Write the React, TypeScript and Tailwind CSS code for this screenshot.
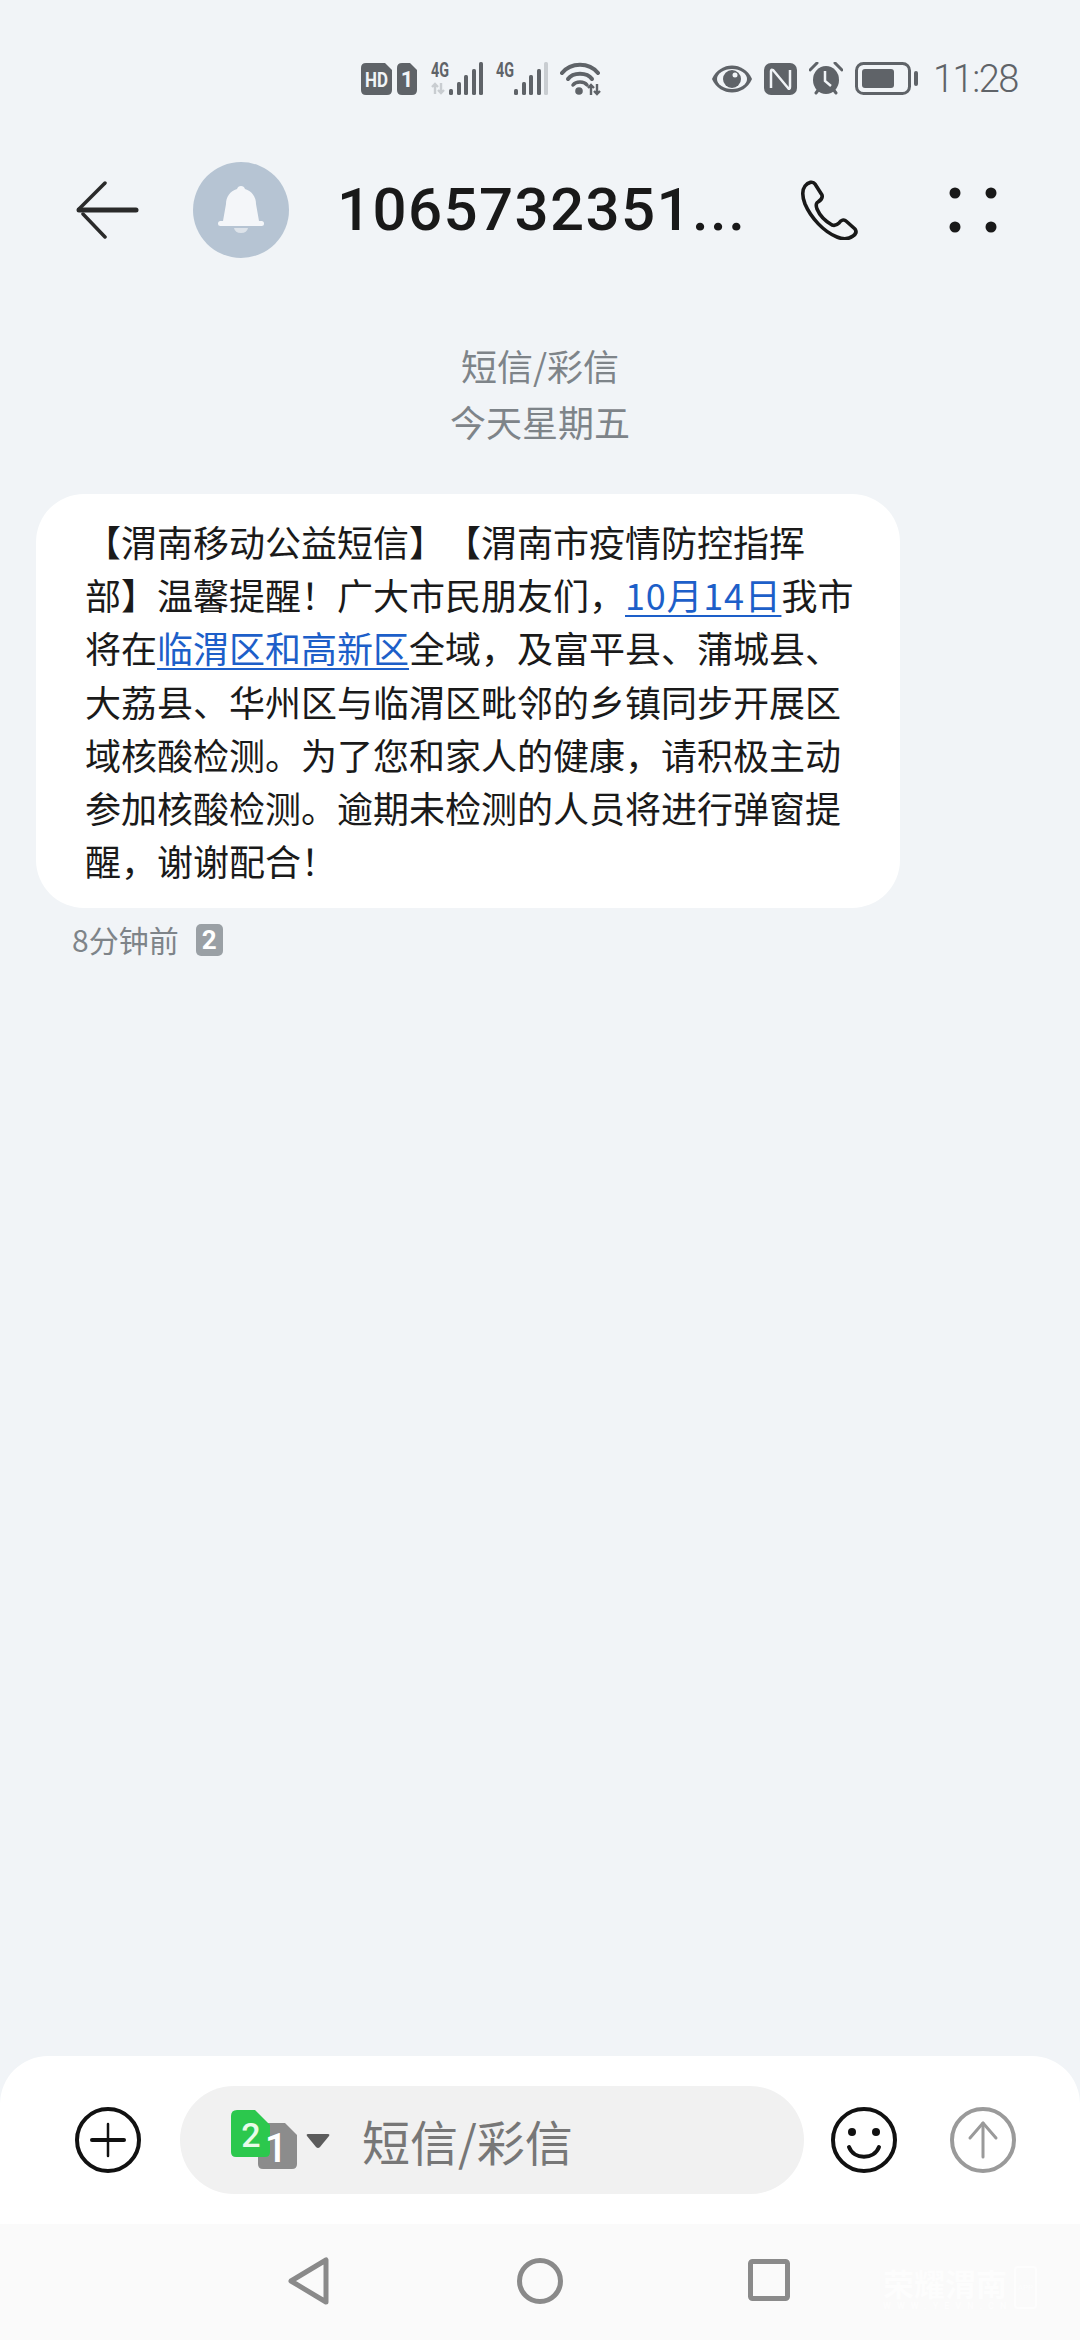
import React from "react";

const cjk = "font-['Noto_Sans_CJK_SC','Noto_Sans',sans-serif]";

function Sim({ label, w }: { label: string; w: number }) {
  return (
    <svg className="overflow-visible" width={w} height={32} viewBox={`0 0 ${w} 32`}>
      <path d={`M5 0 H${w - 7} L${w} 7 V27 Q${w} 32 ${w - 5} 32 H5 Q0 32 0 27 V5 Q0 0 5 0 Z`} fill="#5f6368" />
      <text x={w / 2} y={24} textAnchor="middle" fontFamily="Roboto, sans-serif" fontWeight={700} fontSize={w > 25 ? 20 : 22} fill="#f1f4f7" textLength={w > 25 ? 23 : undefined} lengthAdjust="spacingAndGlyphs">
        {label}
      </text>
    </svg>
  );
}

// data activity arrows beside the signal and wifi icons
function Activity({ x, y, up, down }: { x: number; y: number; up: string; down: string }) {
  return (
    <g fill="none" strokeWidth={2.4}>
      <path d={`M${x + 3} ${y + 11} V${y + 1} M${x} ${y + 4} L${x + 3} ${y + 1} L${x + 6} ${y + 4}`} stroke={up} />
      <path d={`M${x + 9} ${y} V${y + 10} M${x + 6} ${y + 7} L${x + 9} ${y + 10} L${x + 12} ${y + 7}`} stroke={down} />
    </g>
  );
}

function Signal({ dim }: { dim: "first" | "last" }) {
  const bars = [
    { x: 19, h: 6 },
    { x: 27, h: 13 },
    { x: 34, h: 20 },
    { x: 42, h: 26 },
    { x: 49, h: 33 },
  ];
  return (
    <svg className="overflow-visible" width={55} height={36} viewBox="0 0 55 36">
      <text x={1} y={16} fontFamily="Roboto, sans-serif" fontWeight={700} fontSize={20} fill="#5f6368" textLength={18} lengthAdjust="spacingAndGlyphs">
        4G
      </text>
      {dim === "first" && <Activity x={2} y={22} up="#c9cdd1" down="#c9cdd1" />}
      {bars.map((b, i) => (
        <rect
          key={b.x}
          x={b.x}
          y={34 - b.h}
          width={4}
          height={b.h}
          rx={1.5}
          fill={dim === "last" && i === 4 ? "#c9cdd1" : "#5f6368"}
        />
      ))}
    </svg>
  );
}

function Wifi() {
  return (
    <svg width={42} height={34} viewBox="0 0 42 34" fill="none" stroke="#5f6368" strokeWidth={4} strokeLinecap="round">
      <path d="M2 11 C11 0 29 0 38 11" />
      <path d="M8 17 C13 10 27 10 32 17" />
      <path d="M13 23 C16 19 24 19 27 23" strokeWidth={3.5} />
      <circle cx={19} cy={29} r={3.8} fill="#5f6368" stroke="none" />
      <g strokeLinecap="butt">
        <Activity x={28} y={22} up="#5f6368" down="#5f6368" />
      </g>
    </svg>
  );
}

function StatusBar() {
  return (
    <div className="h-[156px] flex items-center pt-[1px]">
      <div className="ml-[361px] flex items-center gap-[5px]">
        <Sim label="HD" w={31} />
        <Sim label="1" w={20} />
      </div>
      <div className="ml-[13px] flex items-center gap-[10px]">
        <Signal dim="first" />
        <Signal dim="last" />
        <Wifi />
      </div>
      <div className="ml-[110px] flex items-center gap-[12px]">
        <svg width={40} height={28} viewBox="0 0 40 28">
          <path d="M0 14 C8 -4 32 -4 40 14 C32 32 8 32 0 14 Z" fill="#5f6368" />
          <ellipse cx={20} cy={14} rx={15} ry={10} fill="#f1f4f7" />
          <circle cx={20} cy={14} r={9} fill="#5f6368" />
          <circle cx={23} cy={10} r={2.5} fill="#f1f4f7" />
        </svg>
        <svg width={33} height={32} viewBox="0 0 33 32">
          <rect width={33} height={32} rx={7} fill="#5f6368" />
          <path d="M7 25 V8 Q7 6 9 7 L24 25 Q26 27 26 24 V7" fill="none" stroke="#f1f4f7" strokeWidth={2.5} />
        </svg>
        <svg width={34} height={34} viewBox="0 0 34 34">
          <path d="M1 8 L8 1 M33 8 L26 1 M7 31 L10 27 M27 31 L24 27" stroke="#5f6368" strokeWidth={3} strokeLinecap="round" />
          <ellipse cx={17} cy={18} rx={13} ry={14} fill="#5f6368" />
          <path d="M16 9 V19 L22 24" fill="none" stroke="#f1f4f7" strokeWidth={2.5} />
        </svg>
        <svg width={64} height={33} viewBox="0 0 64 33">
          <rect x={1.5} y={1.5} width={53} height={30} rx={7} fill="none" stroke="#5f6368" strokeWidth={3} />
          <rect x={7} y={7} width={32} height={19} rx={3} fill="#5f6368" />
          <rect x={59} y={9} width={4} height={15} rx={2} fill="#5f6368" />
        </svg>
      </div>
      <span className="ml-[14px] text-[38px] leading-none tracking-[-1.5px] text-[#5f6368] font-['Roboto',sans-serif] font-light">11:28</span>
    </div>
  );
}

function Header() {
  return (
    <div className="h-[108px] flex items-center">
      <svg className="ml-[76px]" width={64} height={58} viewBox="0 0 64 58" fill="none" stroke="#2a2a2a" strokeLinecap="round">
        <path d="M29 2 L3 28" strokeWidth={3.5} />
        <path d="M3 29 H60" strokeWidth={5} />
        <path d="M7 33 L29 56" strokeWidth={3.5} />
      </svg>
      <div className="ml-[53px] w-[96px] h-[96px] rounded-full bg-[#b6c4d3] flex items-center justify-center">
        <svg width={46} height={48} viewBox="0 0 46 48">
          <path d="M23 0 Q26 0 27 3 C34 5 38 11 38 18 L41 35 H5 L8 18 C8 11 12 5 19 3 Q20 0 23 0 Z" fill="#f4f6f9" />
          <rect x={0} y={35} width={46} height={5} rx={2.5} fill="#f4f6f9" />
          <path d="M16 42 H30 Q29 47 23 47 Q17 47 16 42 Z" fill="#dde3ea" />
        </svg>
      </div>
      <h1 className="ml-[48px] w-[411px] text-[60px] leading-none font-medium tracking-[1.4px] text-[#191919] font-['Roboto',sans-serif]">1065732351...</h1>
      <svg className="ml-[51px]" width={60} height={60} viewBox="0 0 60 60" fill="none" stroke="#191919" strokeWidth={3.6} strokeLinejoin="round">
        <path d="M6 6 C9 2 14 1 16 4 L23 15 C24 18 22 20 19 22 C17 23 17 26 18 29 C21 36 26 41 33 45 C36 46 38 45 40 43 C42 40 45 39 47 41 L56 49 C58 52 57 54 54 56 C50 59 45 60 38 57 C25 52 12 38 6 24 C3 16 3 10 6 6 Z" />
      </svg>
      <svg className="ml-[90px]" width={48} height={46} viewBox="0 0 48 46" fill="#191919">
        <circle cx={6} cy={6} r={5.5} />
        <circle cx={42} cy={6} r={5.5} />
        <circle cx={6} cy={40} r={5.5} />
        <circle cx={42} cy={40} r={5.5} />
      </svg>
    </div>
  );
}

function MessageBubble() {
  const link = "text-[#1d5fc9] underline decoration-[2px] underline-offset-[5px]";
  return (
    <div className="ml-[36px] mt-[45px] w-[864px] h-[414px] rounded-[48px] bg-white pl-[49px] pt-[21px] text-[36px] leading-[53.2px] text-[#1a1a1a] whitespace-nowrap [text-spacing-trim:space-all]">
      <div>【渭南移动公益短信】【渭南市疫情防控指挥</div>
      <div>
        部】温馨提醒！广大市民朋友们，<span className={`${link} tracking-[0.75px]`}>10月14日</span>我市
      </div>
      <div>
        将在<span className={link}>临渭区和高新区</span>全域，及富平县、蒲城县、
      </div>
      <div>大荔县、华州区与临渭区毗邻的乡镇同步开展区</div>
      <div>域核酸检测。为了您和家人的健康，请积极主动</div>
      <div>参加核酸检测。逾期未检测的人员将进行弹窗提</div>
      <div>醒，谢谢配合！</div>
    </div>
  );
}

function Composer() {
  return (
    <div className="h-[168px] rounded-t-[48px] bg-white flex items-center">
      <svg className="ml-[75px]" width={66} height={66} viewBox="0 0 66 66" fill="none" stroke="#111" strokeLinecap="round">
        <circle cx={33} cy={33} r={31} strokeWidth={4} />
        <path d="M33 17 V49" strokeWidth={2.5} />
        <path d="M17 33 H49" strokeWidth={4} />
      </svg>
      <div className="ml-[39px] w-[624px] h-[108px] rounded-full bg-[#f1f1f1] flex items-center pl-[51px]">
        <svg className="overflow-visible" width={98} height={60} viewBox="0 0 98 60">
          {/* sim 1 sits under sim 2 */}
          <path d="M32 13 H54 L66 25 V54 Q66 59 61 59 H32 Q27 59 27 54 V18 Q27 13 32 13 Z" fill="#8c8c8c" />
          <path d="M6 0 H24 L39 15 V42 Q39 47 34 47 H5 Q0 47 0 42 V6 Q0 0 6 0 Z" fill="#2cc84d" />
          <text x={20} y={37} fontFamily="Roboto, sans-serif" fontWeight={500} fontSize={34} fill="#e9fbe9" textAnchor="middle">2</text>
          <text x={45} y={52} fontFamily="Roboto, sans-serif" fontWeight={500} fontSize={40} fill="#fff" textAnchor="middle">1</text>
          <path d="M77 24 H97 Q99 24 98 26 L89 37 Q87 39 85 37 L76 26 Q75 24 77 24 Z" fill="#5c5c5c" />
        </svg>
        <span className="ml-[33px] text-[48px] leading-none text-[#777777]">短信/彩信</span>
      </div>
      <svg className="ml-[27px]" width={66} height={66} viewBox="0 0 66 66" fill="none" stroke="#111">
        <circle cx={33} cy={33} r={31} strokeWidth={4} />
        <circle cx={21} cy={25} r={4} fill="#111" stroke="none" />
        <circle cx={45} cy={25} r={4} fill="#111" stroke="none" />
        <path d="M18 40 C23 53 43 53 48 40" strokeWidth={4} strokeLinecap="round" />
      </svg>
      <svg className="ml-[53px]" width={66} height={66} viewBox="0 0 66 66" fill="none" stroke="#9a9a9a" strokeLinecap="round" strokeLinejoin="round">
        <circle cx={33} cy={33} r={31} strokeWidth={4} />
        <path d="M33 16 V50" strokeWidth={3} />
        <path d="M20 31 L33 16 L46 31" strokeWidth={3} />
      </svg>
    </div>
  );
}

function NavBar() {
  return (
    <div className="relative h-[116px] bg-[#fafafa] flex items-start pt-[33px] pl-[288px]">
      <svg width={42} height={48} viewBox="0 0 42 48" fill="none" stroke="#8a8a8a" strokeWidth={5} strokeLinejoin="round">
        <path d="M38 3 V45 L3 24 Z" />
      </svg>
      <svg className="ml-[187px]" width={46} height={48} viewBox="0 0 46 48" fill="none" stroke="#8a8a8a" strokeWidth={5}>
        <circle cx={23} cy={24} r={20.5} />
      </svg>
      <svg className="ml-[185px] mt-[2px]" width={42} height={42} viewBox="0 0 42 42" fill="none" stroke="#8a8a8a" strokeWidth={5} strokeLinejoin="round">
        <rect x={2.5} y={2.5} width={37} height={37} rx={2} />
      </svg>

      {/* faint site watermark over the corner */}
      <div className="absolute left-[883px] top-[42px] flex gap-[7px] text-[#fdfdfd]">
        <div className="w-[124px]">
          <div className="text-[31px] leading-[34px] font-bold whitespace-nowrap">荣耀渭南</div>
          <div className="mt-[1px] text-[9px] leading-[10px] font-bold tracking-[6px] whitespace-nowrap font-['Roboto',sans-serif]">WWW.YEVN.CN</div>
        </div>
        <div className="w-[23px] h-[43px] rounded-[4px] border-2 border-[#fdfdfd] flex items-center justify-center text-[8px] font-['Roboto',sans-serif]">APP</div>
      </div>
    </div>
  );
}

export default function App() {
  return (
    <div className={`w-[1080px] h-[2340px] bg-[#f1f4f7] flex flex-col overflow-hidden ${cjk}`}>
      <StatusBar />
      <Header />

      <div className="pt-[73px] flex flex-col items-center text-[36px] leading-[56px] text-[#7e8489]">
        <div>短信/彩信</div>
        <div>今天星期五</div>
      </div>

      <MessageBubble />

      <div className="mt-[11px] ml-[72px] h-[40px] flex items-center text-[30px] text-[#7e8489]">
        <span>8分钟前</span>
        <span className="ml-[17px] mt-[2px] w-[27px] h-[32px] rounded-[5px] bg-[#9aa0a5] text-white text-[26px] font-bold leading-[32px] text-center font-['Roboto',sans-serif]">2</span>
      </div>

      <div className="flex-1" />
      <Composer />
      <NavBar />
    </div>
  );
}
